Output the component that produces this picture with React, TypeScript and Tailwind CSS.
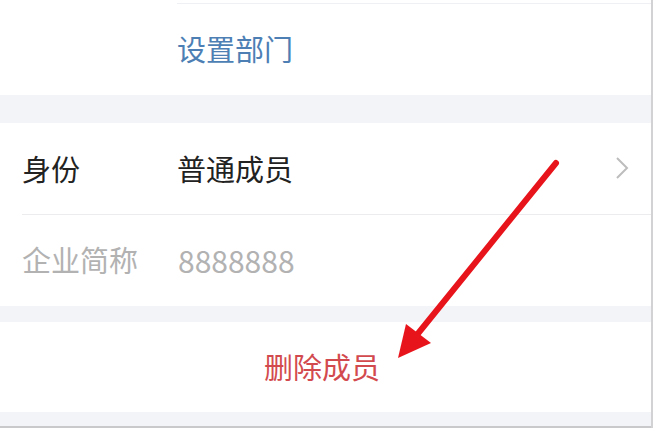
export default function App() {
  const row = "flex items-center text-[29px] leading-none";

  return (
    <div className="relative flex h-[428px] w-[655px] overflow-hidden bg-white font-['Noto_Sans_CJK_SC',sans-serif]">
      <div className="flex w-[651px] flex-col">
        {/* department */}
        <div className="h-[95px] bg-white pt-[3px]">
          <div className={`${row} ml-[177px] h-[92px] border-t border-[#eef0f3] pb-[2px] text-[#4d7fb5]`}>
            设置部门
          </div>
        </div>

        <div className="h-[28px] bg-[#f3f4f7]" />

        {/* identity + company */}
        <div className="bg-white">
          <div className="ml-[22px] flex h-[92px] items-center justify-between border-b border-[#ececee] pr-[22px]">
            <div className={row}>
              <span className="w-[155px] text-[#222]">身份</span>
              <span className="text-[#222]">普通成员</span>
            </div>
            <svg width="14" height="22" viewBox="0 0 14 22" className="mt-[-2px]">
              <polyline points="2,1 12,11 2,21" fill="none" stroke="#bdbdbd" strokeWidth="2" />
            </svg>
          </div>
          <div className={`${row} h-[91px] pl-[22px] pb-[2px] text-[#b2b2b2]`}>
            <span className="w-[156px]">企业简称</span>
            <span className="text-[30px]">8888888</span>
          </div>
        </div>

        <div className="h-[16px] bg-[#f3f4f7]" />

        {/* delete */}
        <div className={`${row} h-[90px] justify-center pb-[2px] pr-[7px] text-[#d34a4e]`}>删除成员</div>

        <div className="flex-1 border-b-2 border-[#c9c9cb] bg-[#f3f4f7]" />
      </div>
      <div className="w-[2px] bg-[#d2d2d4]" />
      <div className="flex-1 bg-white" />

      {/* red annotation arrow */}
      <svg className="pointer-events-none absolute left-0 top-0" width="655" height="428" viewBox="0 0 655 428">
        <line x1="556" y1="163" x2="416" y2="336" stroke="#e8141b" strokeWidth="6" strokeLinecap="round" />
        <polygon points="398,358 406,324 431,343" fill="#e8141b" />
      </svg>
    </div>
  );
}
